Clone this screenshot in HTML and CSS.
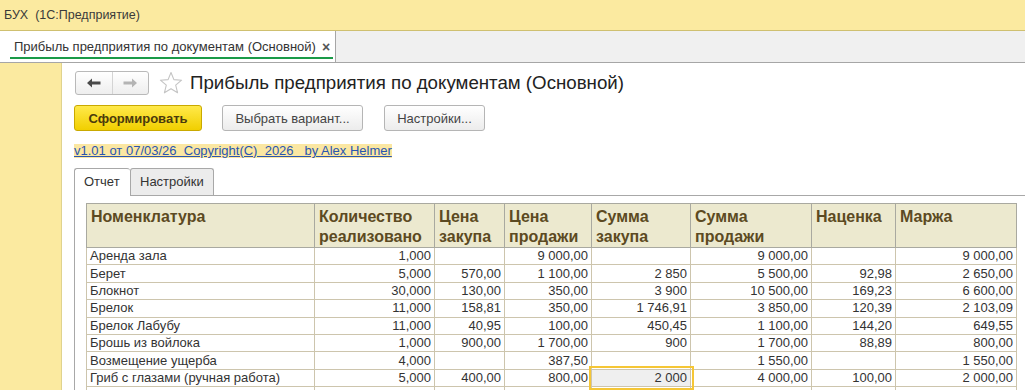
FILE: index.html
```html
<!DOCTYPE html>
<html lang="ru">
<head>
<meta charset="utf-8">
<title>БУХ</title>
<link rel="stylesheet" href="styles.css">
</head>
<body>
<div class="titlebar">БУХ  (1С:Предприятие)</div>
<div class="tabbar">
  <div class="doctab"><span class="doctab-text">Прибыль предприятия по документам (Основной)</span><span class="doctab-close">×</span></div>
</div>
<div class="main">
  <div class="side"></div>
  <div class="content">
    <div class="navrow">
      <div class="navgroup">
        <span class="navbtn">
          <svg width="14" height="10" viewBox="0 0 14 10"><path d="M0 5 L5 0.5 L5 3.5 L13.5 3.5 L13.5 6.5 L5 6.5 L5 9.5 Z" fill="#4a4a4a"/></svg>
        </span>
        <span class="navbtn navbtn-r">
          <svg width="14" height="10" viewBox="0 0 14 10"><path d="M14 5 L9 0.5 L9 3.5 L0.5 3.5 L0.5 6.5 L9 6.5 L9 9.5 Z" fill="#b4b4b4"/></svg>
        </span>
      </div>
      <svg class="star" width="24" height="24" viewBox="0 0 24 24"><path d="M12 1.5 L14.9 8.6 L22.6 9.2 L16.7 14.2 L18.6 21.8 L12 17.7 L5.4 21.8 L7.3 14.2 L1.4 9.2 L9.1 8.6 Z" fill="none" stroke="#c4c4c4" stroke-width="1.1" stroke-linejoin="round"/></svg>
      <h1 class="title">Прибыль предприятия по документам (Основной)</h1>
    </div>
    <div class="btnrow">
      <button class="btn btn-main">Сформировать</button>
      <button class="btn btn-variant">Выбрать вариант...</button>
      <button class="btn btn-settings">Настройки...</button>
    </div>
    <div class="linkrow"><a class="verlink" href="#">v1.01 от 07/03/26  Copyright(C)  2026   by Alex Helmer</a></div>
    <div class="tabs">
      <div class="tab tab-active">Отчет</div>
      <div class="tab">Настройки</div>
    </div>
    <div class="panel">
      <table class="report">
        <colgroup>
          <col class="c1"><col class="c2"><col class="c3"><col class="c4"><col class="c5"><col class="c6"><col class="c7"><col class="c8">
        </colgroup>
        <thead>
          <tr>
            <th>Номенклатура</th>
            <th>Количество реализовано</th>
            <th>Цена закупа</th>
            <th>Цена продажи</th>
            <th>Сумма закупа</th>
            <th>Сумма продажи</th>
            <th>Наценка</th>
            <th>Маржа</th>
          </tr>
        </thead>
        <tbody>
          <tr><td>Аренда зала</td><td>1,000</td><td></td><td>9 000,00</td><td></td><td>9 000,00</td><td></td><td>9 000,00</td></tr>
          <tr><td>Берет</td><td>5,000</td><td>570,00</td><td>1 100,00</td><td>2 850</td><td>5 500,00</td><td>92,98</td><td>2 650,00</td></tr>
          <tr><td>Блокнот</td><td>30,000</td><td>130,00</td><td>350,00</td><td>3 900</td><td>10 500,00</td><td>169,23</td><td>6 600,00</td></tr>
          <tr><td>Брелок</td><td>11,000</td><td>158,81</td><td>350,00</td><td>1 746,91</td><td>3 850,00</td><td>120,39</td><td>2 103,09</td></tr>
          <tr><td>Брелок Лабубу</td><td>11,000</td><td>40,95</td><td>100,00</td><td>450,45</td><td>1 100,00</td><td>144,20</td><td>649,55</td></tr>
          <tr><td>Брошь из войлока</td><td>1,000</td><td>900,00</td><td>1 700,00</td><td>900</td><td>1 700,00</td><td>88,89</td><td>800,00</td></tr>
          <tr><td>Возмещение ущерба</td><td>4,000</td><td></td><td>387,50</td><td></td><td>1 550,00</td><td></td><td>1 550,00</td></tr>
          <tr><td>Гриб с глазами (ручная работа)</td><td>5,000</td><td>400,00</td><td>800,00</td><td class="sel">2 000</td><td>4 000,00</td><td>100,00</td><td>2 000,00</td></tr>
          <tr><td>Декор</td><td>13,000</td><td></td><td>1 925,00</td><td></td><td>25 025,00</td><td></td><td>25 025,00</td></tr>
        </tbody>
      </table>
    </div>
  </div>
</div>
</body>
</html>
```

FILE: styles.css
```css
* { box-sizing: border-box; }
html, body { margin: 0; padding: 0; }
body {
  width: 1025px;
  height: 390px;
  overflow: hidden;
  background: #fff;
  font-family: "Liberation Sans", Arial, sans-serif;
  font-size: 13px;
  color: #333;
}

.titlebar {
  height: 31px;
  background: #fbeaa0;
  border-bottom: 1px solid #cfc070;
  padding-left: 4px;
  line-height: 30px;
  white-space: pre;
  color: #3a3a3a;
  font-size: 12.5px;
}

.tabbar {
  height: 32px;
  background: #f0f0f0;
  border-bottom: 1px solid #a6a6a6;
  display: flex;
}
.doctab {
  width: 336px;
  background: #fff;
  border-right: 1px solid #a6a6a6;
  display: flex;
  align-items: center;
  padding: 0 0 0 14px;
  position: relative;
  font-size: 13px;
  color: #333;
}
.doctab::after {
  content: "";
  position: absolute;
  left: 10px;
  right: 2px;
  bottom: 3px;
  height: 2px;
  background: #1a9a48;
}
.doctab-text { white-space: nowrap; }
.doctab-close {
  margin-left: 6px;
  font-weight: bold;
  font-size: 14px;
  color: #555;
}

.main {
  display: flex;
  height: 327px;
}
.side {
  width: 62px;
  flex: none;
  background: #fbeaa0;
  border-right: 1px solid #e0d38e;
}
.content {
  flex: 1;
  padding: 8px 0 0 12px;
  min-width: 0;
}

.navrow {
  display: flex;
  align-items: center;
  height: 24px;
}
.navgroup {
  display: flex;
  width: 74px;
  height: 24px;
  margin-left: 1px;
  border: 1px solid #b9b9b9;
  border-radius: 3px;
  background: linear-gradient(#ffffff, #eeeeee);
}
.navbtn {
  flex: 1;
  display: flex;
  align-items: center;
  justify-content: center;
}
.navbtn-r { border-left: 1px solid #d4d4d4; }
.star { margin-left: 10px; flex: none; }
.title {
  margin: 0 0 0 7px;
  font-weight: normal;
  font-size: 18.7px;
  color: #222;
  white-space: nowrap;
}

.btnrow {
  display: flex;
  margin-top: 10px;
  height: 26px;
}
.btn {
  height: 26px;
  font-family: inherit;
  font-size: 13px;
  border-radius: 3px;
  padding: 0;
  margin: 0 20px 0 0;
  cursor: pointer;
}
.btn-main {
  width: 128px;
  background: linear-gradient(#ffe94a, #f1cf00);
  border: 1px solid #c9a900;
  font-weight: bold;
  color: #4a3a0c;
}
.btn-variant {
  width: 141px;
  background: linear-gradient(#ffffff, #ececec);
  border: 1px solid #b5b5b5;
  color: #444;
}
.btn-settings {
  width: 101px;
  margin-left: 1px;
  background: linear-gradient(#ffffff, #ececec);
  border: 1px solid #b5b5b5;
  color: #444;
}

.linkrow {
  margin-top: 13px;
  height: 14px;
  display: flex;
}
.verlink {
  background: #fbe7a2;
  color: #2a55b0;
  white-space: pre;
  font-size: 13px;
  line-height: 14px;
  text-decoration: underline;
}

.tabs {
  display: flex;
  margin-top: 10px;
  height: 27px;
}
.tab {
  height: 27px;
  padding: 0 9px;
  line-height: 26px;
  border: 1px solid #a8a8a8;
  border-bottom: none;
  border-radius: 3px 3px 0 0;
  background: #ececec;
  color: #333;
  font-size: 13px;
}
.tab-active {
  width: 56px;
  padding: 0 0 0 9px;
  background: #fff;
  border-right: none;
  height: 28px;
  position: relative;
  z-index: 1;
}

.panel {
  border-top: 1px solid #a8a8a8;
  border-left: 1px solid #a8a8a8;
  padding: 7px 0 0 11px;
  height: 200px;
}

.report {
  border-collapse: collapse;
  table-layout: fixed;
  width: 930px;
}
.c1 { width: 228px; }
.c2 { width: 120px; }
.c3 { width: 70px; }
.c4 { width: 87px; }
.c5 { width: 99px; }
.c6 { width: 121px; }
.c7 { width: 84px; }
.c8 { width: 121px; }

.report th {
  background: #ece9cf;
  border: 1px solid #a9a9a0;
  text-align: left;
  vertical-align: top;
  padding: 3px 3px 0 4px;
  height: 44px;
  font-size: 16px;
  line-height: 20px;
  font-weight: bold;
  color: #5c4a22;
}
.report td {
  border: 1px solid #cdc5ad;
  padding: 0 3px 0 3px;
  height: 17.4px;
  line-height: 16px;
  text-align: right;
  white-space: nowrap;
  overflow: hidden;
  color: #333;
  font-size: 13px;
}
.report td:first-child { text-align: left; }
.report td.sel {
  background: #efefef;
  outline: 2px solid #f5c636;
  outline-offset: 1px;
}
```
